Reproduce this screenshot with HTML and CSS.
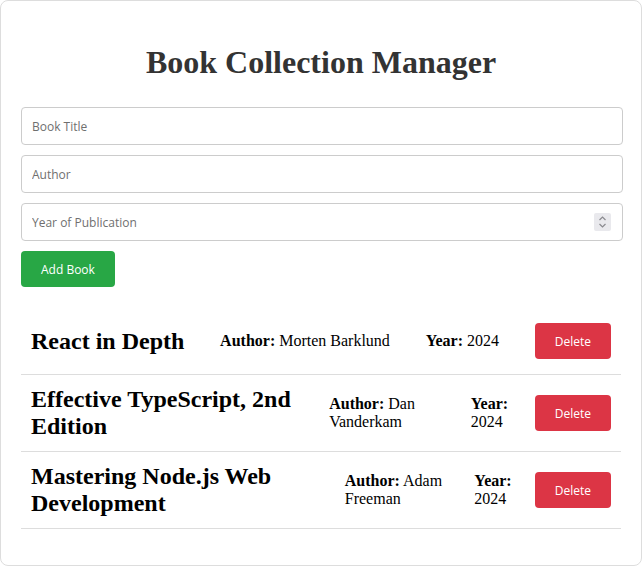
FILE: index.html
```html
<!DOCTYPE html>
<html lang="en">
<head>
<meta charset="utf-8">
<title>Book Collection Manager</title>
<link rel="stylesheet" href="styles.css">
</head>
<body>
<div class="container">
  <h1 class="title">Book Collection Manager</h1>
  <form class="book-form">
    <input class="field" type="text" placeholder="Book Title">
    <input class="field" type="text" placeholder="Author">
    <div class="field-wrap">
      <input class="field field-number" type="number" placeholder="Year of Publication">
      <span class="spinner" aria-hidden="true">
        <svg width="17" height="18" viewBox="0 0 17 18">
          <path d="M5.5 7 L8.5 4 L11.5 7" fill="none" stroke="#8a8a8f" stroke-width="1.2"/>
          <path d="M5.5 11 L8.5 14 L11.5 11" fill="none" stroke="#8a8a8f" stroke-width="1.2"/>
        </svg>
      </span>
    </div>
    <button class="btn btn-add" type="button">Add Book</button>
  </form>
  <ul class="book-list">
    <li class="book">
      <h2 class="book-title">React in Depth</h2>
      <p class="book-meta"><strong>Author:</strong> Morten Barklund</p>
      <p class="book-meta"><strong>Year:</strong> 2024</p>
      <button class="btn btn-delete" type="button">Delete</button>
    </li>
    <li class="book">
      <h2 class="book-title">Effective TypeScript, 2nd Edition</h2>
      <p class="book-meta"><strong>Author:</strong> Dan Vanderkam</p>
      <p class="book-meta"><strong>Year:</strong> 2024</p>
      <button class="btn btn-delete" type="button">Delete</button>
    </li>
    <li class="book">
      <h2 class="book-title">Mastering Node.js Web Development</h2>
      <p class="book-meta"><strong>Author:</strong> Adam Freeman</p>
      <p class="book-meta"><strong>Year:</strong> 2024</p>
      <button class="btn btn-delete" type="button">Delete</button>
    </li>
  </ul>
</div>
</body>
</html>
```
FILE: styles.css
```css
html, body {
  margin: 0;
  padding: 0;
  background: #fff;
}

body {
  font-family: "Liberation Serif", "Times New Roman", serif;
  font-size: 16px;
  color: #000;
}

.container {
  border: 1px solid #ddd;
  border-radius: 8px;
  padding: 20px;
}

.title {
  font-size: 32px;
  font-weight: bold;
  color: #333;
  text-align: center;
  margin: 23px 0 26px;
}

.book-form {
  margin: 0;
}

.field {
  display: block;
  width: calc(100% - 20px);
  padding: 11px 10px 9px;
  margin: 0 0 10px;
  border: 1px solid #ccc;
  border-radius: 4px;
  font-family: "Open Sans", "Noto Sans", sans-serif;
  font-size: 12px;
  line-height: 16px;
  color: #333;
  background: #fff;
}

.field::placeholder {
  color: #6f6f6f;
}

.field-number {
  -moz-appearance: textfield;
}

.field-number::-webkit-inner-spin-button,
.field-number::-webkit-outer-spin-button {
  -webkit-appearance: none;
  margin: 0;
}

.field-wrap {
  position: relative;
}

.spinner {
  position: absolute;
  left: 573px;
  top: 10px;
  width: 17px;
  height: 18px;
  background: #e9e9ed;
  border-radius: 2px;
  pointer-events: none;
}

.spinner svg {
  display: block;
}

.btn {
  border: none;
  border-radius: 4px;
  padding: 11px 20px 9px;
  color: #fff;
  font-family: "Open Sans", "Noto Sans", sans-serif;
  font-size: 12px;
  line-height: 16px;
  cursor: pointer;
}

.btn-add {
  background: #28a745;
}

.btn-delete {
  background: #dc3545;
  margin: 4px 0;
}

.book-list {
  list-style: none;
  padding: 0;
  margin: 21px 0 16px;
}

.book {
  display: flex;
  justify-content: space-between;
  align-items: center;
  padding: 11px 10px;
  border-bottom: 1px solid #ddd;
}

.book-title {
  font-size: 24px;
  margin: 0;
}

.book-meta {
  margin: 0;
}
```
